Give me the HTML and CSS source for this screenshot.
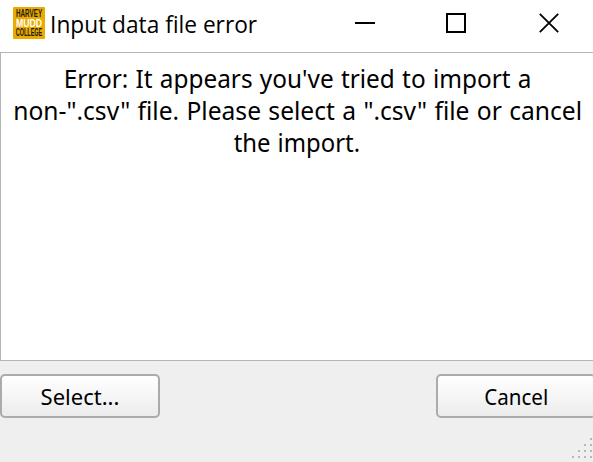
FILE: index.html
```html
<!DOCTYPE html>
<html lang="en">
<head>
<meta charset="utf-8">
<title>Input data file error</title>
<link rel="stylesheet" href="styles.css">
</head>
<body>
<div class="dialog">
  <header class="titlebar">
    <div class="logo"><svg width="32" height="32" viewBox="0 0 32 32"><text transform="translate(16 10.2) scale(.62 1)">HARVEY</text><text class="mid" transform="translate(16 20.2) scale(.76 1)">MUDD</text><text transform="translate(16 29) scale(.535 1)">COLLEGE</text></svg></div>
    <h1 class="title">Input data file error</h1>
    <div class="controls">
      <svg width="20" height="20" viewBox="0 0 20 20"><path d="M0 10H20"/></svg>
      <svg width="20" height="20" viewBox="0 0 20 20"><path d="M1 1H19V19H1Z"/></svg>
      <svg class="close" width="20" height="20" viewBox="0 0 20 20"><path class="cross" d="M.8.8L19.2 19.2M19.2.8L.8 19.2"/></svg>
    </div>
  </header>
  <main class="message">
    <p class="l1">Error: It appears you've tried to import a</p>
    <p class="l2">non-".csv" file. Please select a ".csv" file or cancel</p>
    <p class="l3">the import.</p>
  </main>
  <footer class="actions">
    <button class="btn"><span class="select">Select...</span></button>
    <button class="btn btn-right"><span class="cancel">Cancel</span></button>
  </footer>
  <svg class="grip" width="21" height="20" viewBox="0 0 21 20"><path d="M18 0h2v2h-2zM12 6h2v2h-2zM18 6h2v2h-2zM6 12h2v2H6zM12 12h2v2h-2zM18 12h2v2h-2zM0 18h2v2H0zM6 18h2v2H6zM12 18h2v2h-2zM18 18h2v2h-2z"/></svg>
</div>
</body>
</html>
```
FILE: styles.css
```css
* { box-sizing: border-box; }
body { margin: 0; overflow: hidden; background: #efefef; color: #000; font-family: "Noto Sans", sans-serif; }
.dialog { position: relative; width: 593px; height: 462px; overflow: hidden; display: flex; flex-direction: column; }
.titlebar { flex: none; height: 52px; background: #fff; display: flex; align-items: flex-start; padding: 7px 34px 0 13px; }
.logo { width: 32px; height: 32px; border-radius: 1px; background: #eaaa00; }
.logo svg { display: block; }
.logo text { font: bold 10.2px/1 "Liberation Sans", sans-serif; fill: #1c1a10; text-anchor: middle; }
.logo .mid { fill: #fff; font-size: 11.5px; }
.title { margin: 1px 0 0 5px; font: 400 24px/32px "Open Sans", sans-serif; white-space: nowrap; transform: scaleX(.945); transform-origin: 2px 50%; }
.controls { margin-left: auto; padding-top: 6px; display: flex; gap: 71px; }
.controls svg { display: block; fill: none; stroke: #000; stroke-width: 2; }
.controls .close { margin-left: 2px; }
.controls .cross { stroke-width: 1.8; }
.message { flex: none; height: 309px; background: #fff; border: 1px solid #b5b5b5; border-right: 0; padding-top: 9px; display: flex; flex-direction: column; align-items: center; }
.message p { margin: 0; font-size: 26px; line-height: 32px; white-space: nowrap; word-spacing: 1px; }
.message .l1 { transform: translateX(1px) scaleX(.937); }
.message .l2 { transform: translateX(1px) scaleX(.946); }
.message .l3 { transform: scaleX(.918); }
.actions { flex: none; display: flex; justify-content: space-between; margin: 13px -3px 0 0; }
.btn { width: 160px; height: 44px; padding: 0; border: 2px solid #ababab; border-radius: 5px; background: linear-gradient(#fff, #ececec); color: #000; font: 22px/40px "Noto Sans", sans-serif; }
.cancel { display: inline-block; transform: scaleX(.935); }
.grip { position: absolute; right: 0; bottom: 4px; fill: #b8b8b8; }
```
